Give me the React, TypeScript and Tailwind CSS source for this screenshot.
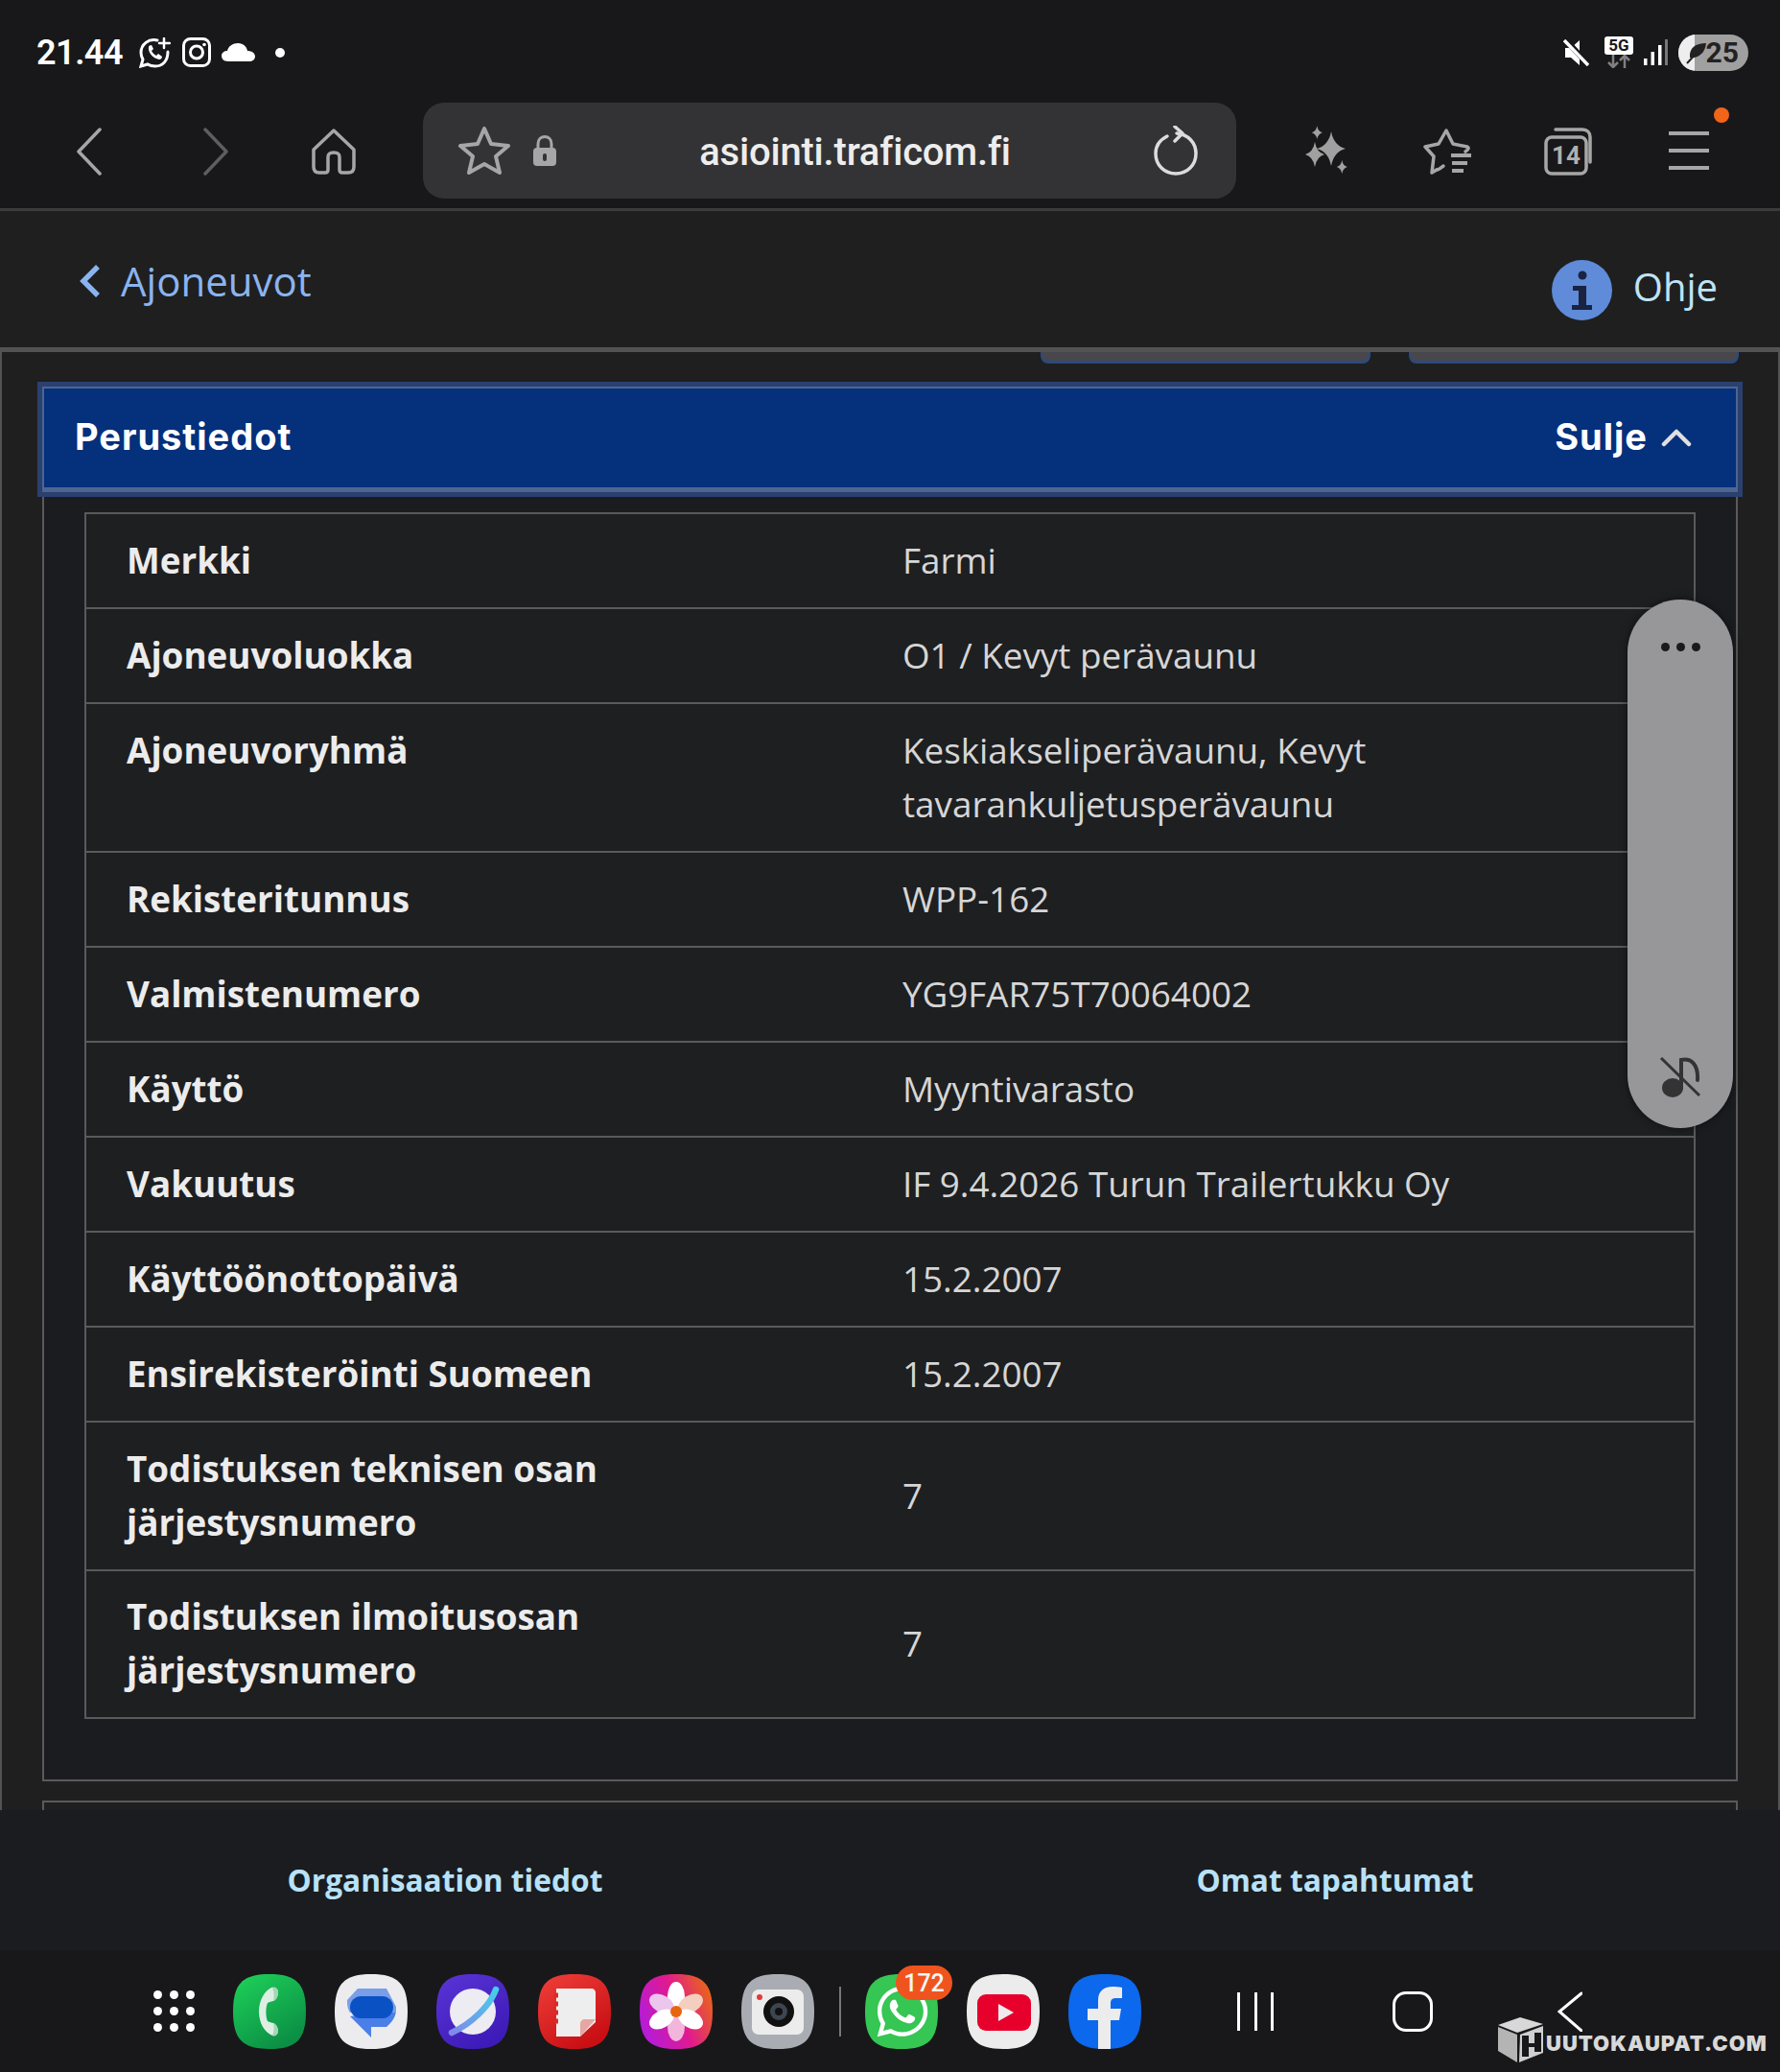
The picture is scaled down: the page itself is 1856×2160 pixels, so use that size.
import React from "react";
import { FaWhatsapp } from "react-icons/fa";

const Squircle = ({ children, fill, className = "" }: { children?: React.ReactNode; fill: string; className?: string }) => (
  <svg width="76" height="78" viewBox="0 0 76 78" className={"shrink-0 " + className}>
    <path d="M38 0C66 0 76 10 76 39C76 68 66 78 38 78C10 78 0 68 0 39C0 10 10 0 38 0Z" fill={fill} />
    {children}
  </svg>
);

const Grad = ({ id, stops }: { id: string; stops: [string, string][] }) => (
  <defs>
    <linearGradient id={id} x1="0" y1="0" x2="0.6" y2="1">
      {stops.map(([o, c]) => (
        <stop key={o} offset={o} stopColor={c} />
      ))}
    </linearGradient>
  </defs>
);

const rows: { k: string; v: React.ReactNode; h: string; top?: boolean }[] = [
  { k: "Merkki", v: "Farmi", h: "h-[97px]" },
  { k: "Ajoneuvoluokka", v: "O1 / Kevyt perävaunu", h: "h-[99px]" },
  { k: "Ajoneuvoryhmä", v: <>Keskiakseliperävaunu, Kevyt<br />tavarankuljetusperävaunu</>, h: "h-[155px]", top: true },
  { k: "Rekisteritunnus", v: "WPP-162", h: "h-[99px]" },
  { k: "Valmistenumero", v: "YG9FAR75T70064002", h: "h-[99px]" },
  { k: "Käyttö", v: "Myyntivarasto", h: "h-[99px]" },
  { k: "Vakuutus", v: "IF 9.4.2026 Turun Trailertukku Oy", h: "h-[99px]" },
  { k: "Käyttöönottopäivä", v: "15.2.2007", h: "h-[99px]" },
  { k: "Ensirekisteröinti Suomeen", v: "15.2.2007", h: "h-[99px]" },
  { k: "Todistuksen teknisen osan järjestysnumero", v: "7", h: "h-[155px]" },
  { k: "Todistuksen ilmoitusosan järjestysnumero", v: "7", h: "h-[154px]" },
];

const spark = (cx: number, cy: number, rx: number, ry: number) =>
  `M${cx} ${cy - ry}Q${cx + rx * 0.18} ${cy - ry * 0.18} ${cx + rx} ${cy}Q${cx + rx * 0.18} ${cy + ry * 0.18} ${cx} ${cy + ry}Q${cx - rx * 0.18} ${cy + ry * 0.18} ${cx - rx} ${cy}Q${cx - rx * 0.18} ${cy - ry * 0.18} ${cx} ${cy - ry}Z`;

function StatusBar() {
  return (
    <div className="flex h-[107px] items-center pl-[38px] pr-[33px] pt-[2px] text-white">
      <span className="w-[95px] font-['Roboto',sans-serif] text-[36px] font-semibold leading-none tracking-[-0.5px]">21.44</span>
      <svg width="33" height="32" viewBox="0 0 33 32" className="ml-[12px]" fill="none" stroke="#fff" strokeWidth="3" strokeLinecap="round">
        <path d="M19 3C10 1 2 7 2 16C2 19 3 21 4 23L2 30L9 28C12 30 14 30 17 30C25 30 30 24 30 15" />
        <path d="M10 10C9 15 14 22 21 23C23 23 24 21 24 20L20 17L18 19C16 18 14 16 13 14L15 12L13 8C11 8 10 9 10 10Z" fill="#fff" stroke="none" />
        <path d="M26 1V11M21 6H32" strokeWidth="2.5" />
      </svg>
      <svg width="30" height="31" viewBox="0 0 30 31" className="ml-[12px]" fill="none" stroke="#fff" strokeWidth="3">
        <rect x="1.5" y="1.5" width="27" height="28" rx="7" />
        <circle cx="15" cy="15.5" r="6.5" />
        <circle cx="23" cy="7.5" r="1.8" fill="#fff" stroke="none" />
      </svg>
      <svg width="35" height="19" viewBox="0 0 35 19" className="ml-[11px]" fill="#fff">
        <path d="M7 19C2 19 0 16 0 13C0 10 3 8 6 8C7 3 12 0 17 0C22 0 26 3 27 8C31 8 35 10 35 14C35 17 32 19 29 19Z" />
      </svg>
      <span className="ml-[21px] h-[10px] w-[10px] rounded-full bg-white" />
      <span className="flex-1" />
      <svg width="27" height="28" viewBox="0 0 27 28" fill="#fff">
        <path d="M2 9H8L17 1V27L8 19H2Z" />
        <path d="M2 0L26 26" stroke="#18181a" strokeWidth="6" />
        <path d="M1 1L26 27" stroke="#fff" strokeWidth="3.5" />
      </svg>
      <span className="ml-[16px] flex h-[33px] w-[30px] flex-col items-center">
        <span className="w-full rounded-[3px] bg-white text-center font-['Roboto',sans-serif] text-[17px] font-bold leading-[19px] text-[#18181a]">5G</span>
        <svg width="26" height="14" viewBox="0 0 26 14" fill="none" stroke="#808080" strokeWidth="2.5">
          <path d="M7 0V12M2 8L7 13L12 8M19 14V2M14 6L19 1L24 6" />
        </svg>
      </span>
      <svg width="25" height="27" viewBox="0 0 25 27" className="ml-[11px]">
        <rect x="0" y="20" width="3.5" height="7" fill="#fff" />
        <rect x="7.5" y="13" width="3.5" height="14" fill="#fff" />
        <rect x="15" y="6" width="3.5" height="21" fill="#fff" />
        <rect x="22" y="0" width="3" height="27" fill="#777" />
      </svg>
      <span className="relative ml-[11px] flex h-[38px] w-[73px] items-center justify-end overflow-hidden rounded-full bg-[#a0a0a0] pr-[10px] font-['Roboto',sans-serif] text-[30px] font-bold leading-none text-[#222]">
        <span className="absolute bottom-0 left-0 top-0 w-[17px] bg-[#eeeeee]" />
        <svg width="24" height="24" viewBox="0 0 24 24" className="absolute left-[7px] top-[7px]">
          <path d="M22 2C11 2 4 7 5 17C13 18 21 13 22 2Z" fill="#222" />
          <path d="M2 23L15 9" stroke="#222" strokeWidth="2" />
        </svg>
        25
      </span>
    </div>
  );
}

const ic = { fill: "none", stroke: "#a6a6a6", strokeWidth: 3.5, strokeLinecap: "round" as const, strokeLinejoin: "round" as const };

function Toolbar() {
  return (
    <div className="flex h-[113px] items-start border-b-[3px] border-[#3c3c3e]">
      <svg width="26" height="50" viewBox="0 0 26 50" className="ml-[80px] mt-[26px]" {...ic}>
        <path d="M24 2L2 25L24 48" />
      </svg>
      <svg width="26" height="50" viewBox="0 0 26 50" className="ml-[106px] mt-[26px]" {...ic} stroke="#5e5e5e">
        <path d="M2 2L24 25L2 48" />
      </svg>
      <svg width="46" height="48" viewBox="0 0 46 48" className="ml-[87px] mt-[27px]" {...ic}>
        <path d="M2 22L23 2L44 22V40C44 44 42 46 38 46H32C30 46 29 45 29 43V30C29 26 27 25 23 25C19 25 17 26 17 30V43C17 45 16 46 14 46H8C4 46 2 44 2 40Z" />
      </svg>
      <div className="ml-[70px] flex h-[100px] w-[848px] items-center rounded-[22px] bg-[#333335] pl-[37px] pr-[40px]">
        <svg width="54" height="50" viewBox="0 0 54 50" {...ic} strokeWidth={4}>
          <path d="M27 2L34 18L52 20L39 31L43 48L27 39L11 48L15 31L2 20L20 18Z" />
        </svg>
        <svg width="24" height="32" viewBox="0 0 24 32" className="ml-[24px]">
          <path d="M5 14V9C5 -1 19 -1 19 9V14" fill="none" stroke="#a6a6a6" strokeWidth="3" />
          <rect x="0" y="13" width="24" height="19" rx="4" fill="#a6a6a6" />
          <rect x="10" y="19" width="4" height="8" rx="2" fill="#333335" />
        </svg>
        <span className="flex-1 pt-[3px] text-center font-['Roboto',sans-serif] text-[40px] font-medium leading-none tracking-[-0.2px] text-[#ededed]">asiointi.traficom.fi</span>
        <svg width="46" height="52" viewBox="0 0 46 52" fill="none" stroke="#dcdcdc" strokeWidth="3.5" strokeLinecap="round" strokeLinejoin="round">
          <path d="M14 11C6 15 2 22 2 29C2 41 11 50 23 50C35 50 44 41 44 29C44 18 36 9 24 8" />
          <path d="M22 1L30 8L22 16" />
        </svg>
      </div>
      <svg width="46" height="56" viewBox="0 0 46 56" className="ml-[71px] mt-[23px]" fill="#a0a0a0">
        <path d={spark(28, 25, 15, 18)} />
        <path d={spark(11, 31, 10, 13)} />
        <path d={spark(13.3, 8.3, 5.5, 7)} />
        <path d={spark(39.3, 44, 5.5, 7)} />
      </svg>
      <svg width="52" height="50" viewBox="0 0 52 50" className="ml-[78px] mt-[26px]" {...ic} strokeWidth={3.5}>
        <path d="M14 44L9 47L11 30L2 20L16 17L24 3L31 17L46 20C48 21 47 23 44 25" />
        <path d="M14 44C16 44 17 43 21 40" />
        <path d="M29 29H50M30 37H46M30 45H42" strokeWidth="4" strokeLinecap="butt" />
      </svg>
      <svg width="50" height="50" viewBox="0 0 50 50" className="ml-[74px] mt-[26px]" {...ic}>
        <rect x="2" y="10" width="42" height="38" rx="6" />
        <path d="M12 2H40C45 2 48 5 48 10V36" />
        <text x="23" y="38" textAnchor="middle" fontFamily="Roboto, sans-serif" fontSize="26" fontWeight="700" fill="#b0b0b0" stroke="none">14</text>
      </svg>
      <div className="relative ml-[80px] mt-[30px] flex h-[40px] w-[42px] flex-col justify-between">
        <span className="h-[4px] bg-[#a6a6a6]" />
        <span className="h-[4px] bg-[#a6a6a6]" />
        <span className="h-[4px] bg-[#a6a6a6]" />
        <span className="absolute -top-[25px] left-[47px] h-[16px] w-[16px] rounded-full bg-[#f26419]" />
      </div>
    </div>
  );
}

function PageHeader() {
  return (
    <div className="flex h-[147px] items-start border-b-[5px] border-[#535356] bg-[#1f1f1f] pl-[83px]">
      <svg width="22" height="34" viewBox="0 0 22 34" className="mt-[56px]" fill="none" stroke="#8ab4f0" strokeWidth="5.5">
        <path d="M19 2L4 17L19 32" />
      </svg>
      <span className="ml-[21px] mt-[44px] font-['Open_Sans',sans-serif] text-[42px] leading-[57px] text-[#8ab4f0]">Ajoneuvot</span>
      <span className="flex-1" />
      <span className="mt-[51px] flex h-[63px] w-[63px] items-center justify-center rounded-full bg-[#5f8bd8]">
        <svg width="24" height="42" viewBox="0 0 24 42" fill="#1a2340">
          <circle cx="13" cy="5" r="4.5" />
          <path d="M3 16H17V36H23V41H2V36H9V21H3Z" />
        </svg>
      </span>
      <span className="ml-[22px] mr-[65px] mt-[52px] font-['Open_Sans',sans-serif] text-[40px] leading-[54px] text-[#bfe3f7]">Ohje</span>
    </div>
  );
}

function Content() {
  return (
    <div className="relative h-[1520px] overflow-hidden border-x-2 border-[#535356] bg-[#1f1f1f]">
      <div className="flex justify-end gap-[40px] pr-[41px]">
        <span className="h-[12px] w-[344px] rounded-b-[8px] border-x-[2px] border-b-[3px] border-[#2b4a80] bg-[#48484c]" />
        <span className="h-[12px] w-[344px] rounded-b-[8px] border-x-[2px] border-b-[3px] border-[#2b4a80] bg-[#48484c]" />
      </div>
      <section className="mx-[42px] mt-[24px] border-x-2 border-b-2 border-[#5a5a5c] bg-[#1b1c20] pb-[63px]">
        <div className="-mx-[2px] flex h-[110px] items-center justify-between border-x-2 border-b-[5px] border-t-[2px] border-[#4f6590] bg-[#04307c] pb-[2px] pl-[32px] pr-[46px] font-['Inter',sans-serif] text-[38px] font-bold tracking-[1px] text-white outline-[5px] outline-[#2a4170]">
          <span>Perustiedot</span>
          <span className="flex items-center gap-[14px]">
            Sulje
            <svg width="32" height="20" viewBox="0 0 32 20" fill="none" stroke="#e0e0e0" strokeWidth="4.5" strokeLinecap="round" strokeLinejoin="round">
              <path d="M3 17L16 4L29 17" />
            </svg>
          </span>
        </div>
        <div className="mx-[42px] mt-[21px] border-2 border-[#5a5a5c] bg-[#1e1f21] font-['Open_Sans',sans-serif] text-[36.8px] leading-[56px]">
          {rows.map((r, i) => (
            <div key={r.k} className={"grid grid-cols-[809px_1fr] pl-[42px] " + r.h + (r.top ? "" : " pb-[2px]") + (i ? " border-t-2 border-[#5a5a5c]" : "")}>
              <div className={(r.top ? "pt-[20px]" : "self-center") + " pr-[100px] font-bold text-[#ececec]"}>{r.k}</div>
              <div className={(r.top ? "pt-[20px]" : "self-center") + " text-[#d6d6d6]"}>{r.v}</div>
            </div>
          ))}
        </div>
      </section>
      <div className="mx-[42px] mt-[20px] h-[20px] border-x-2 border-t-2 border-[#5a5a5c]" />
      <div className="absolute left-[1695px] top-[258px] flex h-[551px] w-[110px] flex-col items-center justify-between rounded-[55px] bg-[#97979a] pb-[32px] pt-[45px] shadow-[0_0_8px_#0008]">
        <div className="flex gap-[7px]">
          <span className="h-[9px] w-[9px] rounded-full bg-[#1a1a1a]" />
          <span className="h-[9px] w-[9px] rounded-full bg-[#1a1a1a]" />
          <span className="h-[9px] w-[9px] rounded-full bg-[#1a1a1a]" />
        </div>
        <svg width="42" height="42" viewBox="0 0 42 42" fill="#333">
          <ellipse cx="13" cy="32" rx="11" ry="10" />
          <path d="M22 32V3C32 1 40 7 39 24" fill="none" stroke="#333" strokeWidth="4" strokeLinecap="round" />
          <path d="M1 1L41 40" stroke="#333" strokeWidth="3" />
        </svg>
      </div>
    </div>
  );
}

function Dock() {
  return (
    <div className="relative flex h-[127px] items-start bg-[#18181a] pl-[160px] pt-[25px]">
      <div className="mt-[17px] grid grid-cols-3 gap-x-[8px] gap-y-[8px]">
        {Array.from({ length: 9 }).map((_, i) => (
          <span key={i} className="h-[9px] w-[9px] rounded-full bg-white" />
        ))}
      </div>
      <div className="ml-[40px] flex gap-[30px]">
        <Squircle fill="url(#g1)">
          <Grad id="g1" stops={[["0", "#1fd35a"], ["1", "#0b8f45"]]} />
          <path d="M40 14C44 13 47 15 47 19C47 23 45 27 42 28C39 29 37 29 36 30C34 34 33.7 44 36 49C37 50 39 50 42 51C45 52 47 56 47 59C47 63 44 65 41 64C32 60 27 50 27 39C27 28 32 18 40 14Z" fill="#dcefe2" />
          <path d="M41 14C44 13 47 15 47 19C47 23 45 27 42 28C43 23 43 18 41 14ZM42 51C45 52 47 56 47 59C47 63 44 65 41 64C43 60 43 55 42 51Z" fill="#a4d6b6" />
        </Squircle>
        <Squircle fill="#ececee">
          <path d="M38 66V55H54C60 50 64 44 64 37L16 44Z" fill="#4a7fe8" />
          <path d="M13 27L24 15H54L64 34V40H16C13 36 13 31 13 27Z" fill="#7a9ee8" />
          <rect x="16" y="23" width="45" height="23" rx="11.5" fill="#0a52c4" />
        </Squircle>
        <Squircle fill="url(#g3)">
          <Grad id="g3" stops={[["0", "#5b35d6"], ["1", "#3d1bb8"]]} />
          <defs>
            <linearGradient id="ring" x1="1" y1="0" x2="0" y2="1">
              <stop offset="0" stopColor="#45cfe8" />
              <stop offset="1" stopColor="#8088ea" />
            </linearGradient>
          </defs>
          <circle cx="38" cy="39" r="24" fill="#ececf2" />
          <path d="M62 16C56 33 36 52 16 61" fill="none" stroke="url(#ring)" strokeWidth="6.5" strokeLinecap="round" />
        </Squircle>
        <Squircle fill="url(#g4)">
          <Grad id="g4" stops={[["0", "#f0403a"], ["1", "#c80f14"]]} />
          <path d="M19 15H56C58 15 60 17 60 19V50L44 65H19Z" fill="#eeeeee" />
          <path d="M60 47L44 65V52C44 49 46 47 49 47Z" fill="#e6a7a2" />
          <path d="M17 22H21M17 31H21M17 40H21M17 49H21" stroke="#d92a28" strokeWidth="5" />
        </Squircle>
        <Squircle fill="url(#g5)">
          <defs>
            <linearGradient id="g5" x1="0" y1="0.6" x2="1" y2="0.2">
              <stop offset="0" stopColor="#b51cd8" />
              <stop offset="0.5" stopColor="#e01a8f" />
              <stop offset="1" stopColor="#ea6a10" />
            </linearGradient>
          </defs>
          <ellipse cx="38" cy="23" rx="9" ry="15" fill="#fff" />
          <ellipse cx="38" cy="55" rx="9" ry="15" fill="#f2b6dc" />
          <ellipse cx="23" cy="31" rx="9" ry="14" fill="#ecc6ec" transform="rotate(-60 23 31)" />
          <ellipse cx="53" cy="31" rx="9" ry="14" fill="#f4cfc0" transform="rotate(60 53 31)" />
          <ellipse cx="23" cy="47" rx="9" ry="14" fill="#fff" transform="rotate(60 23 47)" />
          <ellipse cx="53" cy="47" rx="9" ry="14" fill="#fff" transform="rotate(-60 53 47)" />
          <circle cx="38" cy="39" r="6" fill="#e8650f" />
        </Squircle>
        <Squircle fill="#a9adb3">
          <rect x="11" y="16" width="54" height="47" rx="7" fill="#ececec" />
          <circle cx="39" cy="39" r="16" fill="#111" />
          <circle cx="39" cy="39" r="9" fill="#3d4650" />
          <circle cx="39" cy="39" r="4" fill="#111" />
          <circle cx="19" cy="24" r="3" fill="#e03a3a" />
        </Squircle>
      </div>
      <span className="ml-[26px] mt-[13px] h-[52px] w-[2px] bg-[#777]" />
      <div className="relative ml-[25px] flex gap-[30px]">
        <Squircle fill="#35c653">
          <foreignObject x="9" y="9" width="60" height="60">
            <FaWhatsapp className="text-[60px] text-white" />
          </foreignObject>
        </Squircle>
        <span className="absolute -top-[9px] left-[32px] flex h-[36px] w-[59px] items-center justify-center rounded-[18px] bg-[#f0541e] font-['Roboto',sans-serif] text-[25px] font-medium leading-none text-[#f5f5f5]">172</span>
        <Squircle fill="#ececec">
          <rect x="11" y="21" width="56" height="38" rx="9" fill="#e8002c" />
          <path d="M33 31L49 40L33 49Z" fill="#ececec" />
        </Squircle>
        <Squircle fill="#0c68ec">
          <path d="M31 78V48H20V36H31V27C31 17 38 13 46 13C49 13 53 13 56 14V25H50C45 25 44 27 44 31V36H55L53 48H44V78Z" fill="#ececec" />
        </Squircle>
      </div>
      <div className="ml-[100px] mt-[19px] flex h-[40px] w-[38px] justify-between">
        <span className="h-full w-[3px] bg-white" />
        <span className="h-full w-[3px] bg-white" />
        <span className="h-full w-[3px] bg-white" />
      </div>
      <span className="ml-[124px] mt-[18px] h-[42px] w-[42px] rounded-[14px] border-[3px] border-white" />
      <svg width="26" height="42" viewBox="0 0 26 42" className="ml-[130px] mt-[18px]" fill="none" stroke="#fff" strokeWidth="3" strokeLinecap="round">
        <path d="M25 2L2 21L25 41" />
      </svg>
      <div className="absolute left-[1561px] top-[70px] flex items-center">
        <svg width="49" height="48" viewBox="0 0 49 48">
          <path d="M1 8L24 0L48 7L21 16Z" fill="#d8d8d8" />
          <path d="M1 10L21 18V47L1 35Z" fill="#b4b4b4" />
          <path d="M24 18L48 9V37L23 47Z" fill="#cfcfcf" />
          <path d="M26 19H33V27H39V16H46V36H39V31H33V41H26Z" fill="#18181a" />
        </svg>
        <span className="ml-[2px] mt-[6px] font-['Inter',sans-serif] text-[22px] font-black leading-none tracking-[1px] text-[#d8d8d8]">UUTOKAUPAT.COM</span>
      </div>
    </div>
  );
}

export default function App() {
  return (
    <div className="h-[2160px] w-[1856px] overflow-hidden bg-[#18181a]">
      <StatusBar />
      <Toolbar />
      <PageHeader />
      <Content />
      <div className="grid h-[146px] grid-cols-2 items-center bg-[#1b1c20] font-['Open_Sans',sans-serif] text-[31.7px] font-bold text-[#b8e2f8]">
        <span className="text-center">Organisaation tiedot</span>
        <span className="text-center">Omat tapahtumat</span>
      </div>
      <Dock />
    </div>
  );
}
